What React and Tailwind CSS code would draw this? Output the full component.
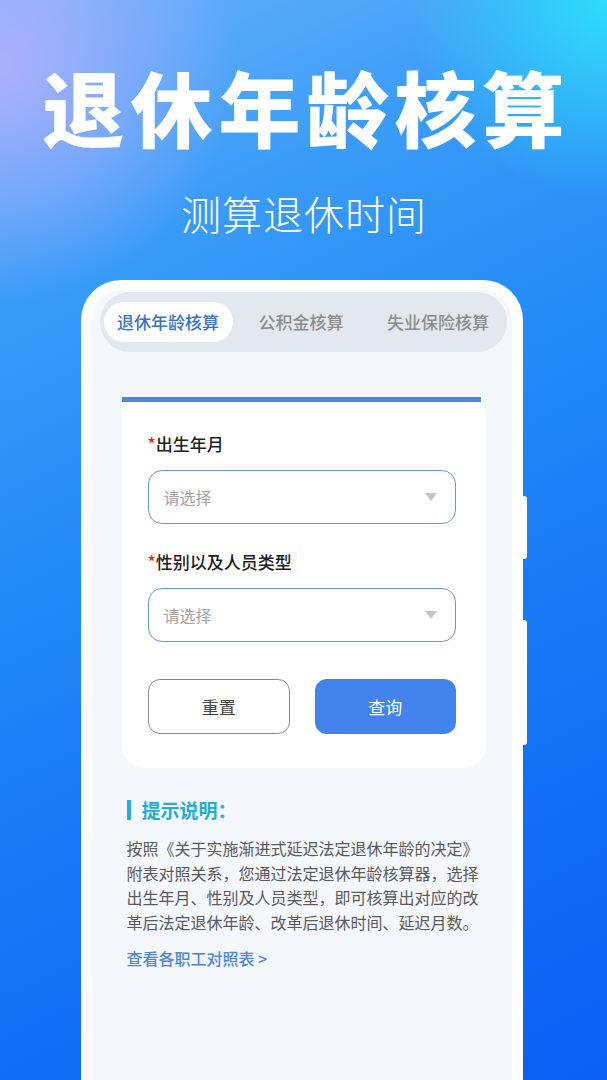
import React from "react";

const tabs = ["退休年龄核算", "公积金核算", "失业保险核算"];

function Field({ label }) {
  return (
    <div>
      <div className="text-[17px] leading-[24px] font-medium text-[#1f1f1f]">
        <span className="text-[#d9262c]">*</span>
        {label}
      </div>
      <div className="mt-[14px] h-[54px] rounded-[14px] border-[1.5px] border-[#6e93cf] flex items-center justify-between pl-[15px] pr-[18px]">
        <span className="text-[16px] text-[#a3a3a3]">请选择</span>
        <span className="w-0 h-0 border-x-[6px] border-t-[8px] border-x-transparent border-t-[#c4c4c4]" />
      </div>
    </div>
  );
}

export default function App() {
  return (
    <div className="h-[1080px] w-full overflow-hidden flex flex-col items-center font-['Noto_Sans_CJK_SC','Noto_Sans',sans-serif] bg-[radial-gradient(circle_at_0%_6%,rgba(186,176,250,0.85),transparent_20%),radial-gradient(circle_at_100%_0%,rgba(44,228,250,0.9),transparent_16%),linear-gradient(155deg,#6cb2f9_0%,#3a9cf8_22%,#2189f6_45%,#1474f5_70%,#0a5ef5_100%)]">
      <h1 className="mt-[61px] pl-[6px] text-[82px] leading-[90px] font-black tracking-[6px] text-white">
        退休年龄核算
      </h1>
      <p className="mt-[38px] pl-[1px] text-[40px] leading-[48px] font-light tracking-[1px] text-white">
        测算退休时间
      </p>

      <div className="relative mt-[43px] mr-[4px] w-[442px] flex-1 bg-white rounded-t-[40px] px-[11px] pt-[10px]">
        <div className="absolute right-[-4px] top-[216px] h-[63px] w-[5px] rounded-r-[3px] bg-white" />
        <div className="absolute right-[-4px] top-[340px] h-[125px] w-[5px] rounded-r-[3px] bg-white" />

        <div className="h-full rounded-t-[31px] bg-[#f4f7fb] pl-[8px] pr-[5px] pt-[2px]">
          <div className="flex items-center h-[60px] rounded-[30px] bg-[#e3e8ef] pl-[4px]">
            {tabs.map((t, i) =>
              i === 0 ? (
                <div
                  key={t}
                  className="w-[129px] h-[40px] rounded-[20px] bg-white flex items-center justify-center text-[17px] font-medium text-[#3a72c4]"
                >
                  {t}
                </div>
              ) : (
                <div key={t} className="flex-1 text-center text-[17px] font-medium text-[#8c8c8c]">
                  {t}
                </div>
              )
            )}
          </div>

          <div className="mt-[45px] ml-[22px] mr-[21px]">
            <div className="h-[5px] mr-[5px] bg-[#4a88e8]" />
            <div className="bg-white rounded-b-[22px] rounded-tr-[12px] pl-[26px] pr-[30px] pt-[30px] pb-[34px]">
              <Field label="出生年月" />
              <div className="mt-[26px]">
                <Field label="性别以及人员类型" />
              </div>
              <div className="mt-[37px] flex gap-[25px]">
                <button className="flex-1 h-[55px] rounded-[12px] border border-[#8a8a8a] bg-white text-[17px] text-[#444]">
                  重置
                </button>
                <button className="flex-1 h-[55px] rounded-[12px] bg-[#4283ee] text-[17px] text-white">
                  查询
                </button>
              </div>
            </div>
          </div>

          <div className="mt-[29px] pl-[27px]">
            <div className="flex items-center gap-[11px]">
              <div className="w-[4px] h-[20px] bg-[#1cb3d4]" />
              <div className="text-[19px] leading-[26px] font-bold text-[#26acd0]">提示说明：</div>
            </div>
            <div className="mt-[13px] text-[16px] leading-[24.5px] text-[#5a5a5a] whitespace-nowrap">
              <div>按照《关于实施渐进式延迟法定退休年龄的决定》</div>
              <div>附表对照关系，您通过法定退休年龄核算器，选择</div>
              <div>出生年月、性别及人员类型，即可核算出对应的改</div>
              <div>革后法定退休年龄、改革后退休时间、延迟月数。</div>
            </div>
            <div className="mt-[12px] text-[16px] leading-[24px] font-medium text-[#4b87d6]">
              查看各职工对照表 &gt;
            </div>
          </div>
        </div>
      </div>
    </div>
  );
}
